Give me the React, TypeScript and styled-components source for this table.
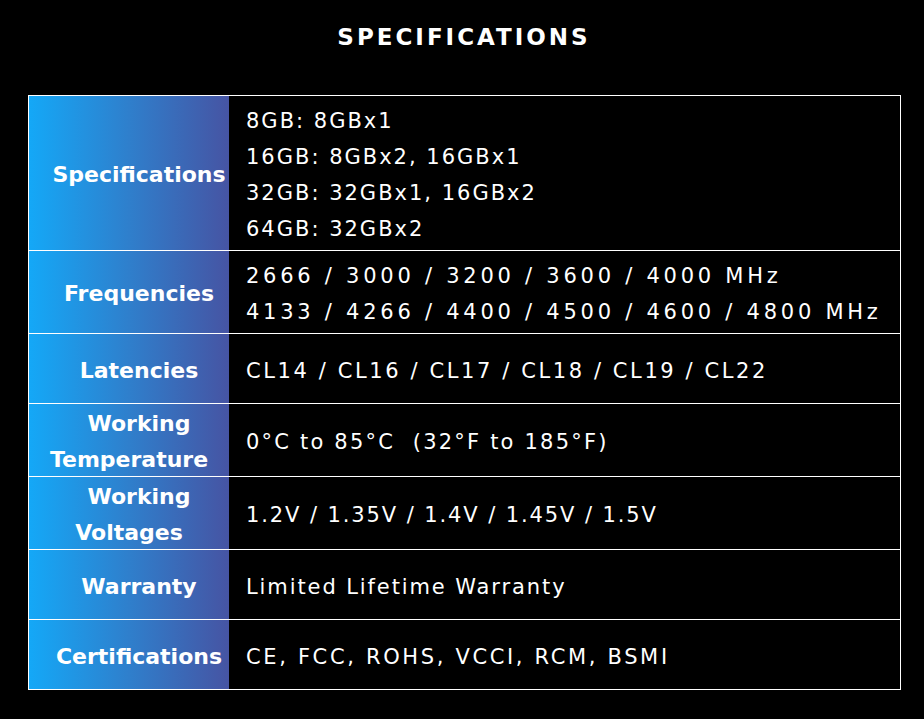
import React from "react";
import styled, { createGlobalStyle } from "styled-components";

const Global = createGlobalStyle`
  html, body { margin: 0; padding: 0; background: #000; }
  body { font-family: "DejaVu Sans", "Liberation Sans", sans-serif; color: #fff; }
`;

const Page = styled.div`
  width: 924px;
  min-height: 719px;
  background: #000;
  padding-top: 22px;
  box-sizing: border-box;
`;

const Title = styled.h2`
  margin: 0 0 43px;
  text-align: center;
  font-size: 23px;
  line-height: 30px;
  font-weight: 700;
  letter-spacing: 3px;
  padding-left: 4px;
  color: #fff;
`;

const Table = styled.div`
  margin-left: 28px;
  width: 873px;
  box-sizing: border-box;
  border: 1px solid #fff;
`;

const Row = styled.div`
  display: grid;
  grid-template-columns: 200px 1fr;
  min-height: 69px;
  & + & { border-top: 1px solid #fff; }
`;

const Label = styled.div`
  background: linear-gradient(90deg, #14a8f7 0%, #2f7fcc 50%, #4654a3 100%);
  display: flex;
  flex-direction: column;
  align-items: center;
  justify-content: center;
  text-align: center;
  font-weight: 700;
  font-size: 22px;
  line-height: 36px;
  white-space: nowrap;
`;

const LabelLine = styled.span`
  display: block;
  transform: translateY(2px);
`;

const Indent = styled.span`
  display: inline-block;
  width: 20px;
`;

const Value = styled.div<{ $track: number }>`
  display: flex;
  flex-direction: column;
  justify-content: center;
  padding: 7px 17px 3px;
  font-size: 21px;
  line-height: 36px;
  letter-spacing: ${(p) => p.$track}px;
  white-space: nowrap;
`;

const rows: { label: string[]; lines: string[]; track: number }[] = [
  {
    label: ["Specifications"],
    lines: ["8GB: 8GBx1", "16GB: 8GBx2, 16GBx1", "32GB: 32GBx1, 16GBx2", "64GB: 32GBx2"],
    track: 2.0,
  },
  {
    label: ["Frequencies"],
    lines: [
      "2666 / 3000 / 3200 / 3600 / 4000 MHz",
      "4133 / 4266 / 4400 / 4500 / 4600 / 4800 MHz",
    ],
    track: 3.75,
  },
  { label: ["Latencies"], lines: ["CL14 / CL16 / CL17 / CL18 / CL19 / CL22"], track: 2.6 },
  { label: ["Working", "Temperature"], lines: ["0°C to 85°C\u00a0 (32°F to 185°F)"], track: 2.2 },
  { label: ["Working", "Voltages"], lines: ["1.2V / 1.35V / 1.4V / 1.45V / 1.5V"], track: 1.9 },
  { label: ["Warranty"], lines: ["Limited Lifetime Warranty"], track: 1.9 },
  { label: ["Certifications"], lines: ["CE, FCC, ROHS, VCCI, RCM, BSMI"], track: 2.65 },
];

export default function App() {
  return (
    <Page>
      <Global />
      <Title>SPECIFICATIONS</Title>
      <Table>
        {rows.map((r) => (
          <Row key={r.label.join(" ")}>
            <Label>
              {r.label.map((l, i) => (
                <LabelLine key={l}>
                  {i === 0 && <Indent />}
                  {l}
                </LabelLine>
              ))}
            </Label>
            <Value $track={r.track}>
              {r.lines.map((l) => (
                <span key={l}>{l}</span>
              ))}
            </Value>
          </Row>
        ))}
      </Table>
    </Page>
  );
}
